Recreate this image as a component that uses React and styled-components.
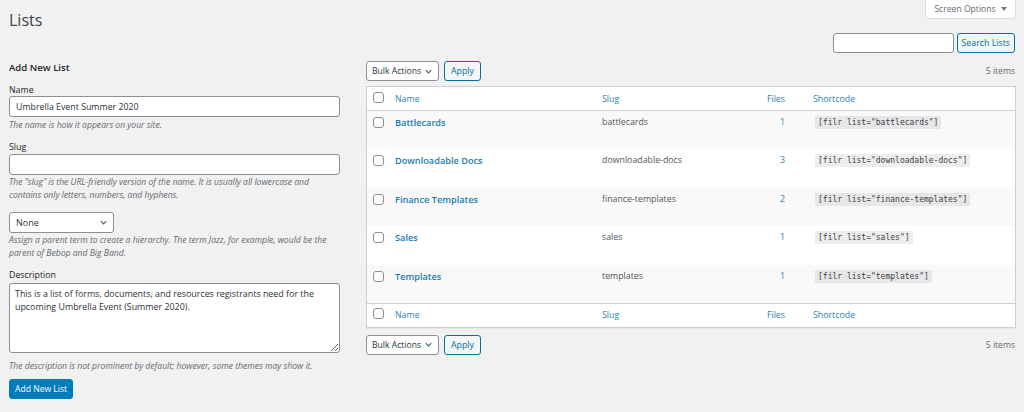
import React from "react";
import styled, { createGlobalStyle } from "styled-components";

const GlobalStyle = createGlobalStyle`
  html, body { margin: 0; padding: 0; }
  body {
    background: #f1f1f1;
    font-family: "Open Sans", "Noto Sans", sans-serif;
    font-size: 9px;
    color: #3c434a;
  }
  * { box-sizing: border-box; }
`;

const Wrap = styled.div`
  padding: 0 8px 0 9px;
  width: 1024px;
`;

const TopRow = styled.div`
  display: flex;
  justify-content: space-between;
  align-items: flex-start;
  height: 33px;
`;

const Title = styled.h1`
  margin: 0;
  padding-top: 9px;
  font-size: 16px;
  line-height: 22px;
  font-weight: 400;
  color: #3c434a;
`;

const ScreenTab = styled.div`
  width: 91px;
  height: 19px;
  background: #fff;
  border: 1px solid #dcdcde;
  border-top: none;
  border-radius: 0 0 3px 3px;
  display: flex;
  align-items: center;
  justify-content: center;
  gap: 5px;
  color: #646970;
  font-size: 8.6px;
  white-space: nowrap;
`;

const Caret = styled.span`
  width: 0;
  height: 0;
  border-left: 3px solid transparent;
  border-right: 3px solid transparent;
  border-top: 4px solid #72777c;
`;

const SearchRow = styled.div`
  display: flex;
  justify-content: flex-end;
  gap: 3px;
  height: 20px;
  padding-right: 1px;
`;

const TextInput = styled.input`
  display: block;
  width: ${(p) => p.$w || "100%"};
  height: ${(p) => p.$h || 21}px;
  border: 1px solid #8c8f94;
  border-radius: 3px;
  background: #fff;
  padding: 0 6px;
  font-family: inherit;
  font-size: 8.8px;
  color: #2c3338;
  outline: none;
`;

const SecondaryButton = styled.button`
  height: 20px;
  padding: 0 ${(p) => p.$px || 6}px;
  border: 1px solid #0071a1;
  border-radius: 3px;
  background: #f3f5f6;
  color: #0071a1;
  font-family: inherit;
  font-size: 8.8px;
  line-height: 18px;
  white-space: nowrap;
  cursor: pointer;
`;

const Columns = styled.div`
  display: flex;
  gap: 26px;
  margin-top: 8px;
  align-items: flex-start;
`;

const LeftCol = styled.div`
  width: 331px;
  flex: none;
`;

const RightCol = styled.div`
  flex: 1;
  min-width: 0;
`;

const FormTitle = styled.h2`
  margin: 0 0 10px;
  font-size: 9.6px;
  line-height: 13px;
  font-weight: 600;
  color: #23282d;
`;

const Field = styled.div`
  margin-bottom: ${(p) => p.$mb || 0}px;
`;

const Label = styled.label`
  display: block;
  line-height: 12px;
  margin-bottom: ${(p) => p.$mb || 0}px;
  color: #23282d;
  font-size: 8.8px;
`;

const Help = styled.p`
  margin: ${(p) => p.$mt || 2}px 0 0;
  font-style: italic;
  color: #646970;
  font-size: 8.6px;
  line-height: 13px;
`;

const SelectBox = styled.div`
  width: ${(p) => p.$w}px;
  height: ${(p) => p.$h || 21}px;
  border: 1px solid #8c8f94;
  border-radius: 3px;
  background: #fff;
  display: flex;
  align-items: center;
  justify-content: space-between;
  padding: 0 5px 0 ${(p) => p.$pl || 6}px;
  font-size: ${(p) => p.$fs || 9}px;
  color: #2c3338;
  white-space: nowrap;
`;

const Chevron = () => (
  <svg width="9" height="9" viewBox="0 0 20 20" aria-hidden="true">
    <path d="M4 7 L10 13 L16 7" fill="none" stroke="#555d66" strokeWidth="2.6" />
  </svg>
);

const TextArea = styled.textarea`
  display: block;
  width: 100%;
  height: 70px;
  border: 1px solid #8c8f94;
  border-radius: 3px;
  background: #fff;
  padding: 3px 5px;
  font-family: inherit;
  font-size: 8.9px;
  line-height: 13px;
  color: #2c3338;
  resize: vertical;
  white-space: pre-wrap;
  outline: none;
`;

const PrimaryButton = styled.button`
  height: 20px;
  padding: 0 5px;
  border: 1px solid #007cba;
  border-radius: 3px;
  background: #007cba;
  color: #fff;
  font-family: inherit;
  font-size: 8.6px;
  margin-top: 6px;
  white-space: nowrap;
`;

const TableNav = styled.div`
  display: flex;
  align-items: center;
  gap: 5px;
  height: 20px;
  margin: ${(p) => p.$m || "0"};
`;

const ItemCount = styled.span`
  margin-left: auto;
  color: #646970;
  font-size: 8.6px;
  padding-right: 1px;
`;

const Table = styled.table`
  width: 100%;
  border-collapse: separate;
  border-spacing: 0;
  table-layout: fixed;
  background: #fff;
  border: 1px solid #ccd0d4;
  box-shadow: 0 1px 1px rgba(0, 0, 0, 0.04);
`;

const HeadCell = styled.th`
  height: ${(p) => p.$h || 24}px;
  font-weight: 400;
  text-align: ${(p) => p.$align || "left"};
  padding: 0 ${(p) => p.$pr || 6}px 0 6px;
  color: #2a84b5;
  font-size: 8.8px;
  vertical-align: middle;
  border-bottom: ${(p) => (p.$foot ? "none" : "1px solid #ccd0d4")};
  border-top: ${(p) => (p.$foot ? "1px solid #ccd0d4" : "none")};
`;

const CheckHeadCell = styled.th`
  padding: 0 0 0 6px;
  vertical-align: middle;
  border-bottom: ${(p) => (p.$foot ? "none" : "1px solid #ccd0d4")};
  border-top: ${(p) => (p.$foot ? "1px solid #ccd0d4" : "none")};
`;

const Row = styled.tr`
  background: ${(p) => (p.$alt ? "#f9f9f9" : "#fff")};
`;

const Cell = styled.td`
  height: 38.4px;
  vertical-align: top;
  padding: 5px ${(p) => p.$pr || 6}px 0 6px;
  text-align: ${(p) => p.$align || "left"};
  line-height: 13px;
  font-size: 8.8px;
  color: ${(p) => p.$color || "#50575e"};
`;

const CheckCell = styled.td`
  vertical-align: top;
  padding: 5px 0 0 6px;
`;

const Check = styled.span`
  display: block;
  width: 11px;
  height: 11px;
  border: 1px solid #8c8f94;
  border-radius: 3px;
  background: #fff;
  margin-top: ${(p) => p.$mt || 1}px;
`;

const RowLink = styled.a`
  color: #1a7cb0;
  font-weight: 600;
  font-size: 9.2px;
  text-decoration: none;
`;

const Code = styled.code`
  font-family: "DejaVu Sans Mono", "Liberation Mono", monospace;
  font-size: 8px;
  background: rgba(0, 0, 0, 0.07);
  color: #3c434a;
  padding: 2px 3px;
  margin-left: 2px;
`;

const lists = [
  { name: "Battlecards", slug: "battlecards", files: 1 },
  { name: "Downloadable Docs", slug: "downloadable-docs", files: 3 },
  { name: "Finance Templates", slug: "finance-templates", files: 2 },
  { name: "Sales", slug: "sales", files: 1 },
  { name: "Templates", slug: "templates", files: 1 },
];

const HeaderRow = ({ foot }) => (
  <tr>
    <CheckHeadCell $foot={foot}>
      <Check $mt={-3} />
    </CheckHeadCell>
    <HeadCell $foot={foot} $h={foot ? 21 : 24}>Name</HeadCell>
    <HeadCell $foot={foot}>Slug</HeadCell>
    <HeadCell $foot={foot} $align="right" $pr={22}>Files</HeadCell>
    <HeadCell $foot={foot}>Shortcode</HeadCell>
  </tr>
);

const BulkNav = ({ m }) => (
  <TableNav $m={m}>
    <SelectBox $w={73} $h={20} $pl={5} $fs={8.6}>
      Bulk Actions <Chevron />
    </SelectBox>
    <SecondaryButton $px={6}>Apply</SecondaryButton>
    <ItemCount>5 items</ItemCount>
  </TableNav>
);

export default function App() {
  return (
    <>
      <GlobalStyle />
      <Wrap>
        <TopRow>
          <Title>Lists</Title>
          <ScreenTab>
            Screen Options <Caret />
          </ScreenTab>
        </TopRow>
        <SearchRow>
          <TextInput $w="121px" $h={20} readOnly />
          <SecondaryButton $px={4}>Search Lists</SecondaryButton>
        </SearchRow>
        <Columns>
          <LeftCol>
            <FormTitle>Add New List</FormTitle>
            <Field $mb={9}>
              <Label>Name</Label>
              <TextInput readOnly defaultValue="Umbrella Event Summer 2020" />
              <Help>The name is how it appears on your site.</Help>
            </Field>
            <Field $mb={10}>
              <Label $mb={1}>Slug</Label>
              <TextInput readOnly />
              <Help $mt={1}>
                The “slug” is the URL-friendly version of the name. It is usually all lowercase and
                <br />
                contains only letters, numbers, and hyphens.
              </Help>
            </Field>
            <Field $mb={9}>
              <SelectBox $w={105}>
                None <Chevron />
              </SelectBox>
              <Help $mt={1}>
                Assign a parent term to create a hierarchy. The term Jazz, for example, would be the
                <br />
                parent of Bebop and Big Band.
              </Help>
            </Field>
            <Field>
              <Label $mb={2}>Description</Label>
              <TextArea
                readOnly
                defaultValue={
                  "This is a list of forms, documents, and resources registrants need for the\nupcoming Umbrella Event (Summer 2020)."
                }
              />
              <Help $mt={7}>
                The description is not prominent by default; however, some themes may show it.
              </Help>
            </Field>
            <PrimaryButton>Add New List</PrimaryButton>
          </LeftCol>
          <RightCol>
            <BulkNav m="0 0 5px" />
            <Table>
              <colgroup>
                <col style={{ width: "22px" }} />
                <col style={{ width: "207px" }} />
                <col style={{ width: "145px" }} />
                <col style={{ width: "66px" }} />
                <col />
              </colgroup>
              <thead>
                <HeaderRow />
              </thead>
              <tbody>
                {lists.map((l, i) => (
                  <Row key={l.slug} $alt={i % 2 === 0}>
                    <CheckCell>
                      <Check />
                    </CheckCell>
                    <Cell>
                      <RowLink href="#">{l.name}</RowLink>
                    </Cell>
                    <Cell>{l.slug}</Cell>
                    <Cell $align="right" $pr={22} $color="#2a84b5">
                      {l.files}
                    </Cell>
                    <Cell>
                      <Code>[filr list="{l.slug}"]</Code>
                    </Cell>
                  </Row>
                ))}
              </tbody>
              <tfoot>
                <HeaderRow foot />
              </tfoot>
            </Table>
            <BulkNav m="7px 0 0" />
          </RightCol>
        </Columns>
      </Wrap>
    </>
  );
}
